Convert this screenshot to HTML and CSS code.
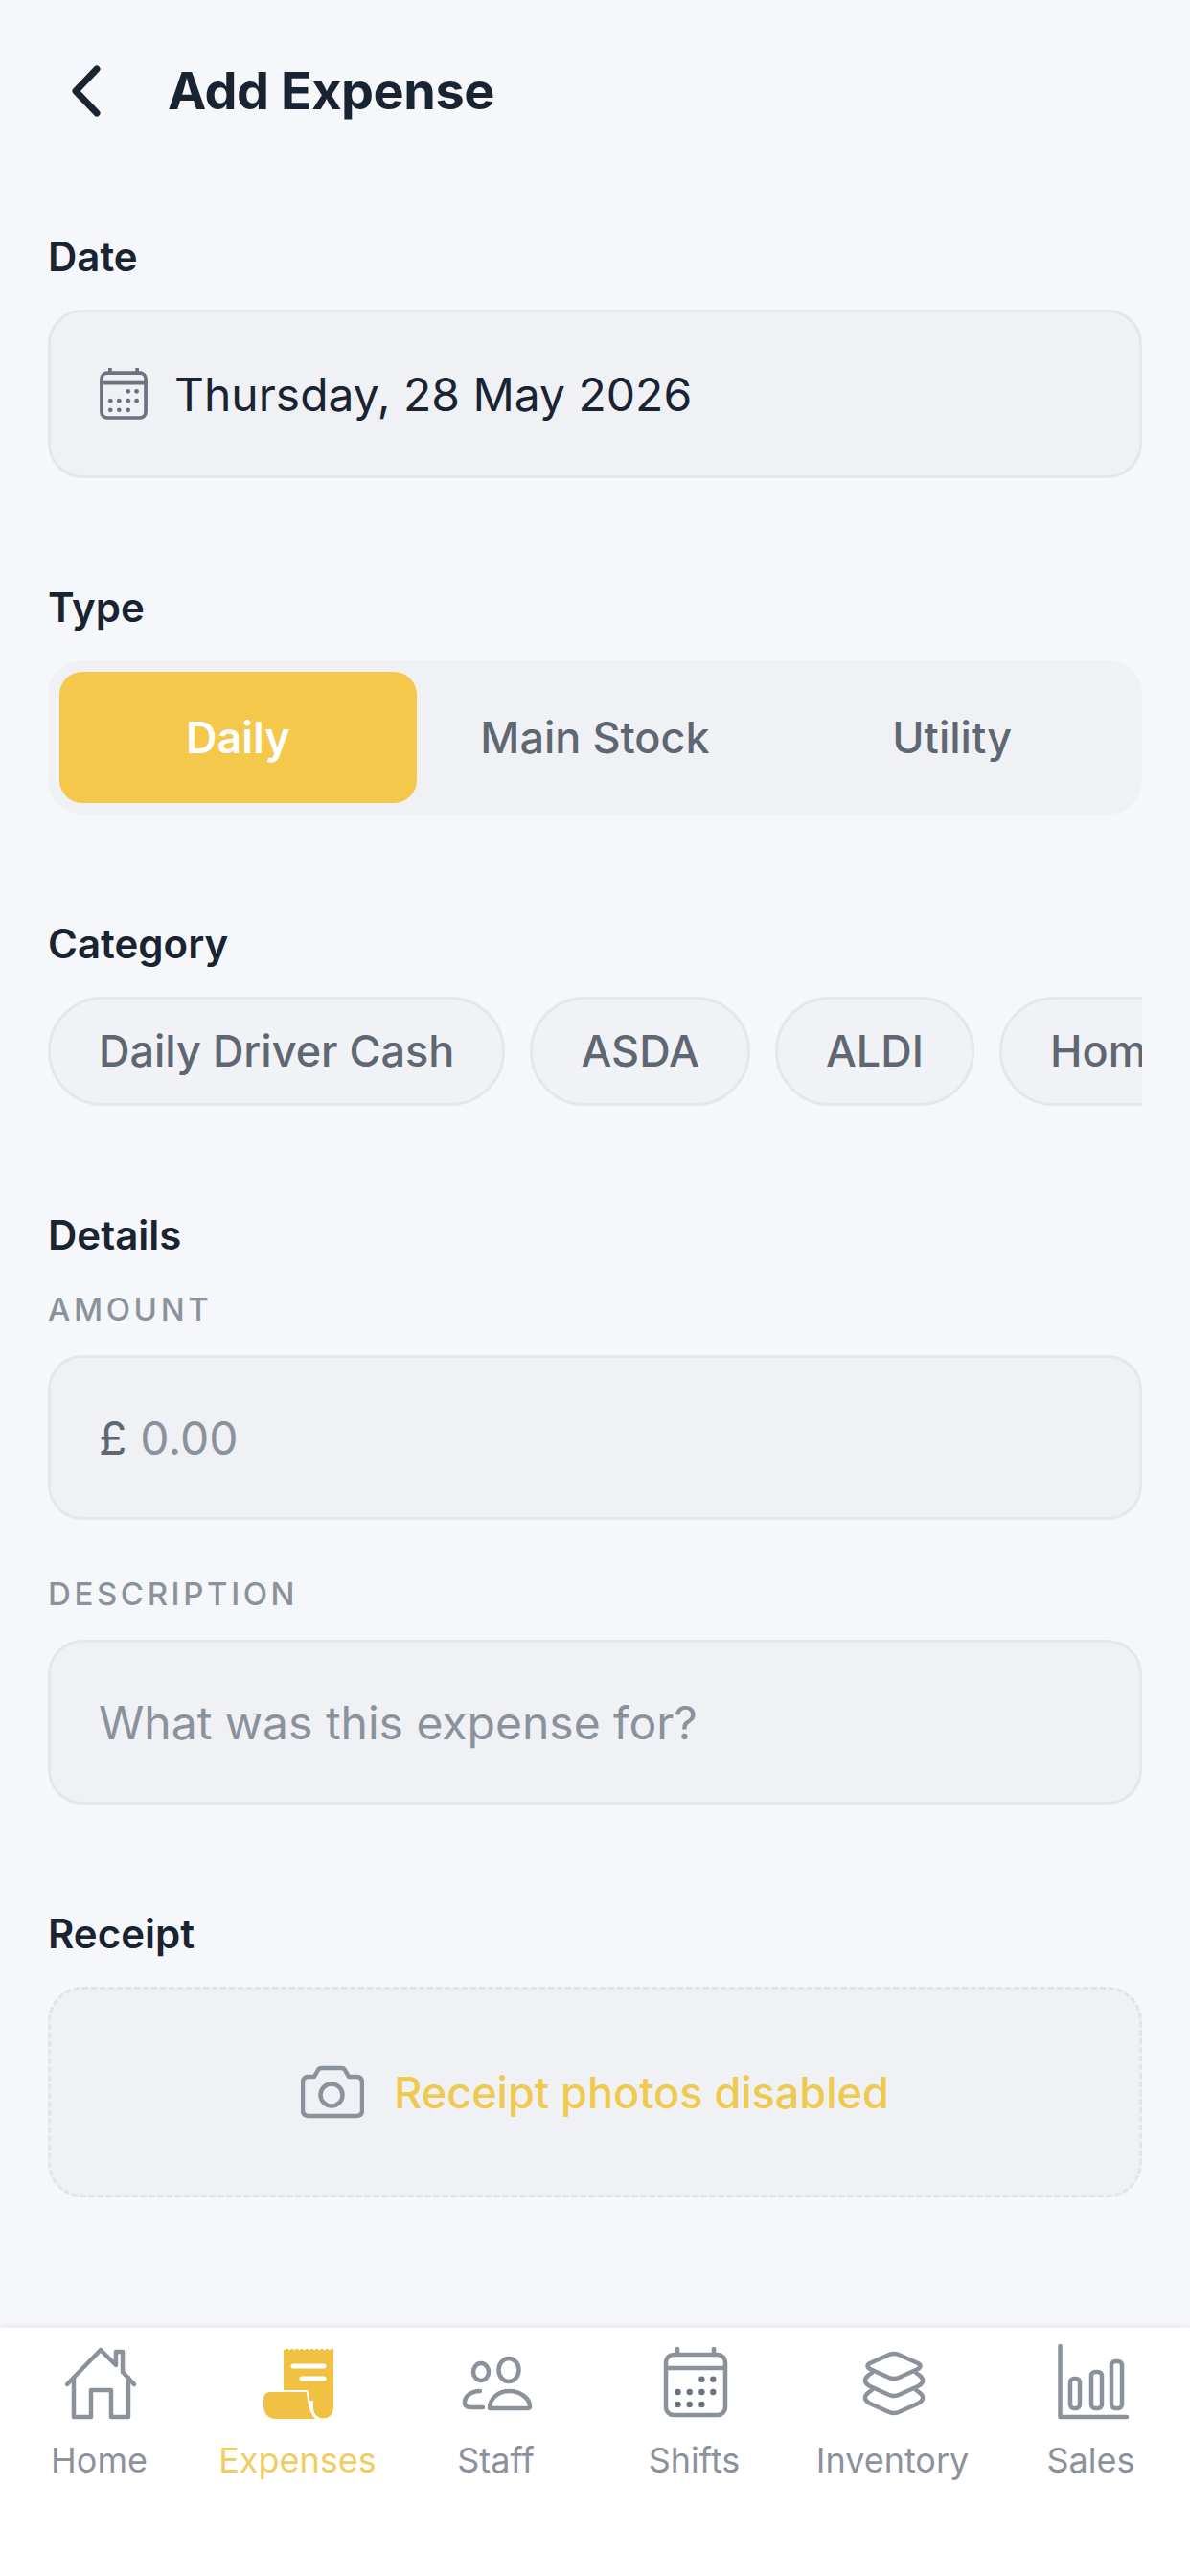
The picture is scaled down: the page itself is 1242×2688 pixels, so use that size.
FILE: index.html
```html
<!DOCTYPE html>
<html lang="en">

<head>
    <meta charset="UTF-8">
    <meta name="viewport" content="width=device-width, initial-scale=1.0">
    <title>Add Expense</title>
    <link rel="stylesheet" href="styles.css">
</head>

<body>
    <div class="page">
        <header class="topbar">
            <svg class="back-icon" viewBox="0 0 40 60">
                <path d="M31 8 L9 31 L31 54" />
            </svg>
            <h1>Add Expense</h1>
        </header>

        <main class="content">
            <section class="group">
                <div class="label">Date</div>
                <div class="field date-field">
                    <svg class="date-icon" viewBox="8 5 70 74">
                        <rect x="12" y="12" width="62" height="63" rx="8" />
                        <path d="M12 26 H74 M24 6 V12 M62 6 V12" />
                        <g class="dots">
                            <circle cx="49.4" cy="37.7" r="3.2" />
                            <circle cx="61.3" cy="37.7" r="3.2" />
                            <circle cx="24.5" cy="51" r="3.2" />
                            <circle cx="36.7" cy="51" r="3.2" />
                            <circle cx="49.4" cy="51" r="3.2" />
                            <circle cx="61.3" cy="51" r="3.2" />
                            <circle cx="24.5" cy="64" r="3.2" />
                            <circle cx="36.7" cy="64" r="3.2" />
                            <circle cx="49.4" cy="64" r="3.2" />
                        </g>
                    </svg>
                    <span>Thursday, 28 May 2026</span>
                </div>
            </section>

            <section class="group">
                <div class="label">Type</div>
                <div class="segments">
                    <div class="segment active">Daily</div>
                    <div class="segment">Main Stock</div>
                    <div class="segment">Utility</div>
                </div>
            </section>

            <section class="group">
                <div class="label">Category</div>
                <div class="chips">
                    <div class="chip">Daily Driver Cash</div>
                    <div class="chip">ASDA</div>
                    <div class="chip">ALDI</div>
                    <div class="chip">Home</div>
                </div>
            </section>

            <section class="group">
                <div class="label details-label">Details</div>
                <div class="sublabel">AMOUNT</div>
                <div class="field amount-field">
                    <span class="currency">£</span>
                    <span class="placeholder">0.00</span>
                </div>
                <div class="sublabel second">DESCRIPTION</div>
                <div class="field">
                    <span class="placeholder">What was this expense for?</span>
                </div>
            </section>

            <section class="group">
                <div class="label">Receipt</div>
                <div class="receipt">
                    <svg class="camera-icon" viewBox="0 0 66 56">
                        <path d="M8 12 H14 L18 5 Q19 3 22 3 H42 Q45 3 46 5 L50 12 H58 Q64 12 64 18 V47 Q64 53 58 53 H8 Q2 53 2 47 V18 Q2 12 8 12 Z" />
                        <circle cx="32" cy="31" r="11.5" />
                    </svg>
                    <span>Receipt photos disabled</span>
                </div>
            </section>
        </main>

        <nav class="tabbar">
            <div class="tab">
                <svg class="tab-icon" viewBox="0 0 84 84">
                    <path d="M8 43 L43 7 L59 23 V9 H66 V30 L78 43" />
                    <path d="M15 36 V77 H33 V49 H54 V77 H72 V36" />
                </svg>
                <span>Home</span>
            </div>
            <div class="tab active">
                <svg class="tab-icon" viewBox="0 0 84 84">
                    <path class="solid" d="M27 6 H79 V68 A10.5 10.5 0 0 1 58 68 V60 H27 Z" />
                    <path class="foot" d="M13 51 H51 C52 60 53 72 60 79 H19 C11 79 6 73 6 65 V58 C6 54 9 51 13 51 Z" />
                    <path class="cut" d="M37 24 H69 M46 37 H69" />
                    <path class="teeth" d="M28 6 H79" />
                </svg>
                <span>Expenses</span>
            </div>
            <div class="tab">
                <svg class="tab-icon" viewBox="0 0 84 84">
                    <ellipse cx="55" cy="28" rx="10.5" ry="12" />
                    <ellipse cx="26" cy="30" rx="8" ry="9" />
                    <path d="M35 68 C35 57 45 50 55.5 50 C66 50 77 57 77 66 Q77 68 74 68 Z" />
                    <path d="M25 50 C16 50 9 55 9 62 C9 66 12 67 15 67 H28" />
                </svg>
                <span>Staff</span>
            </div>
            <div class="tab">
                <svg class="tab-icon" viewBox="0 0 84 84">
                    <rect x="12" y="12" width="62" height="63" rx="8" />
                    <path d="M12 26 H74 M24 6 V12 M62 6 V12" />
                    <g class="dots">
                        <circle cx="49.4" cy="37.7" r="3.2" />
                        <circle cx="61.3" cy="37.7" r="3.2" />
                        <circle cx="24.5" cy="51" r="3.2" />
                        <circle cx="36.7" cy="51" r="3.2" />
                        <circle cx="49.4" cy="51" r="3.2" />
                        <circle cx="61.3" cy="51" r="3.2" />
                        <circle cx="24.5" cy="64" r="3.2" />
                        <circle cx="36.7" cy="64" r="3.2" />
                        <circle cx="49.4" cy="64" r="3.2" />
                    </g>
                </svg>
                <span>Shifts</span>
            </div>
            <div class="tab">
                <svg class="tab-icon" viewBox="0 0 84 84">
                    <path d="M38 12 Q43 10 48 12 L68 21 Q73 24 68 27 L48 36 Q43 38 38 36 L18 27 Q13 24 18 21 Z" />
                    <path d="M20 31 L17 33 Q12 37 13 40 Q14 43 18 45 L38 54 Q43 56 48 54 L68 45 Q72 43 73 40 Q74 37 69 33 L66 31" />
                    <path d="M20 49 L17 51 Q12 55 13 58 Q14 61 18 63 L38 72 Q43 74 48 72 L68 63 Q72 61 73 58 Q74 55 69 51 L66 49" />
                </svg>
                <span>Inventory</span>
            </div>
            <div class="tab">
                <svg class="tab-icon" viewBox="0 0 84 84">
                    <path d="M9.500 3 V77 H79" />
                    <rect x="20" y="37" width="10" height="31" rx="4" />
                    <rect x="42" y="30" width="11" height="38" rx="4" />
                    <rect x="63" y="19" width="11" height="49" rx="4" />
                </svg>
                <span>Sales</span>
            </div>
        </nav>
    </div>
</body>

</html>
```

FILE: styles.css
```css
* {
    box-sizing: border-box;
}

body {
    margin: 0;
    background-color: #f5f7fa;
    font-family: Inter, "Noto Sans", sans-serif;
    color: #1a2332;
}

.page {
    display: flex;
    flex-direction: column;
    width: 1242px;
    height: 2688px;
    overflow: hidden;
}

.topbar {
    display: flex;
    align-items: center;
    height: 188px;
    padding-left: 70px;
    flex-shrink: 0;
}

.back-icon {
    width: 40px;
    height: 60px;
    fill: none;
    stroke: #1a2332;
    stroke-width: 7;
    stroke-linecap: round;
    stroke-linejoin: round;
}

h1 {
    margin: 0 0 0 65px;
    font-size: 54px;
    font-weight: 700;
    letter-spacing: -0.5px;
}

.content {
    flex: 1;
    padding: 50px 50px 0;
}

.group {
    margin-bottom: 105px;
}

.label {
    height: 60px;
    margin-bottom: 25px;
    font-size: 42px;
    line-height: 60px;
    font-weight: 600;
}

.details-label {
    margin-bottom: 27px;
}

.sublabel {
    height: 40px;
    margin-bottom: 28px;
    font-size: 33px;
    line-height: 40px;
    font-weight: 500;
    letter-spacing: 3.600px;
    color: #8b929c;
}

.sublabel.second {
    margin-top: 57px;
}

.field {
    display: flex;
    align-items: center;
    height: 172px;
    padding: 0 50px;
    background-color: #eff1f5;
    border: 3px solid #e5e7eb;
    border-radius: 36px;
    font-size: 48px;
}

.date-field {
    height: 176px;
}

.date-icon {
    width: 52px;
    height: 55px;
    margin-right: 27px;
    fill: none;
    stroke: #6b7280;
    stroke-width: 5;
    stroke-linecap: round;
}

.dots {
    fill: #6b7280;
    stroke: none;
}

.segments {
    display: flex;
    height: 161px;
    padding: 12px;
    background-color: #eff1f5;
    border-radius: 36px;
}

.segment {
    flex: 1;
    display: flex;
    align-items: center;
    justify-content: center;
    border-radius: 24px;
    font-size: 45px;
    font-weight: 500;
    color: #5f6772;
}

.segment.active {
    background-color: #f3c84b;
    color: #fff;
    font-weight: 600;
}

.chips {
    display: flex;
    gap: 26px;
    overflow: hidden;
}

.chip {
    flex-shrink: 0;
    height: 114px;
    padding: 0 50px;
    background-color: #f0f2f5;
    border: 3px solid #e5e7eb;
    border-radius: 57px;
    font-size: 45px;
    line-height: 108px;
    font-weight: 500;
    color: #5f6772;
}

.currency {
    margin-right: 14px;
    color: #5f6772;
}

.placeholder {
    color: #8b929c;
}

.receipt {
    display: flex;
    align-items: center;
    justify-content: center;
    height: 220px;
    background-color: #eff1f5;
    border: 3px dashed #e2e4e9;
    border-radius: 36px;
    font-size: 45px;
    font-weight: 500;
    color: #f0c94f;
}

.camera-icon {
    width: 66px;
    height: 56px;
    margin-right: 31px;
    fill: none;
    stroke: #8b929c;
    stroke-width: 4.500;
    stroke-linejoin: round;
}

.tabbar {
    display: flex;
    height: 259px;
    padding-top: 16px;
    background-color: #fff;
    box-shadow: 0 -3px 6px rgba(0, 0, 0, 0.05);
    flex-shrink: 0;
}

.tab {
    flex: 1;
    display: flex;
    flex-direction: column;
    align-items: center;
    font-size: 36px;
    line-height: 44px;
    color: #8b929c;
}

.tab span {
    margin-top: 16px;
}

.tab-icon {
    width: 84px;
    height: 84px;
    fill: none;
    stroke: #8b929c;
    stroke-width: 4.500;
    stroke-linecap: round;
    stroke-linejoin: round;
}

.tab.active {
    color: #efcd5e;
}

.tab.active .tab-icon {
    stroke: none;
}

.solid {
    fill: #f0c143;
}

.tab-icon .foot {
    fill: #f0c143;
    stroke: #fff;
    stroke-width: 4;
    paint-order: stroke;
}

.tab-icon .cut {
    stroke: #fff;
    stroke-width: 5;
}

.tab-icon .teeth {
    stroke: #fff;
    stroke-width: 2.500;
    stroke-dasharray: 0 5.200;
}
```
